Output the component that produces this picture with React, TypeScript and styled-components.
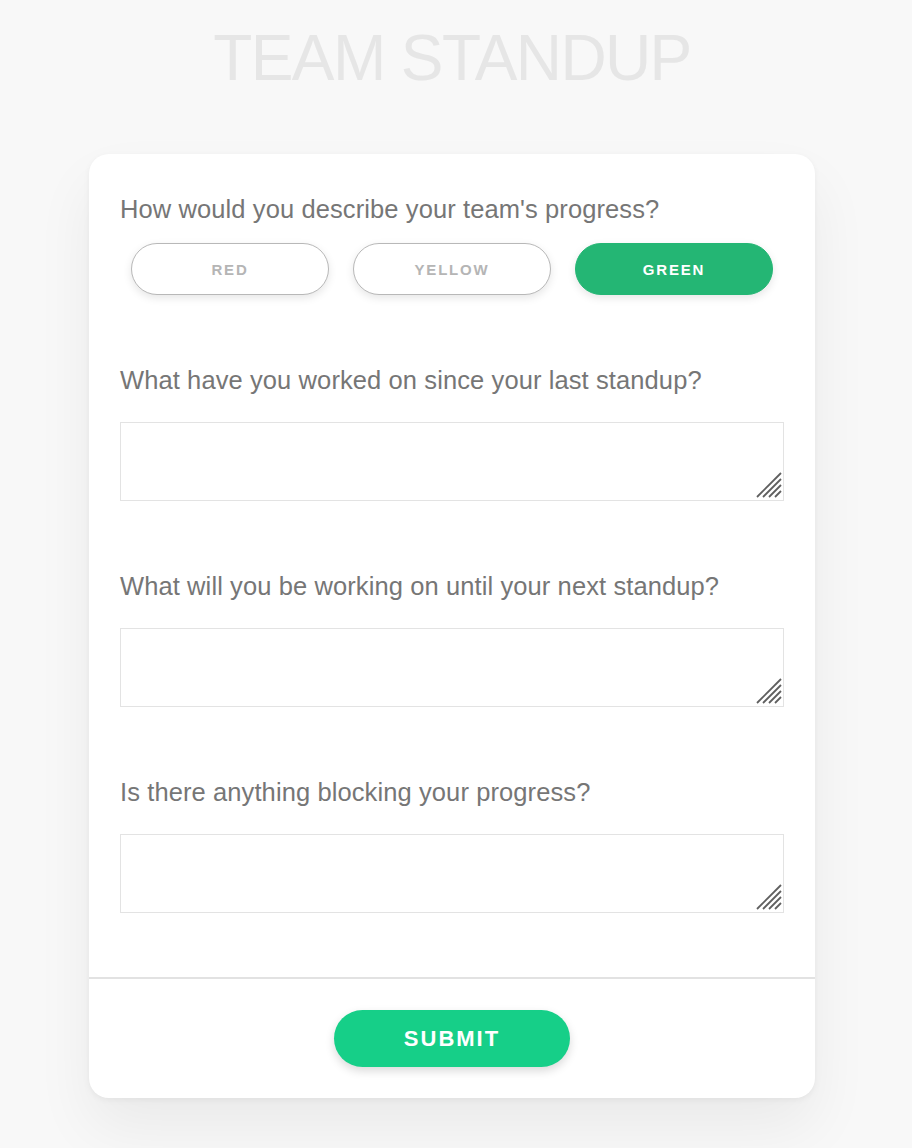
import React, { useState } from "react";
import styled, { createGlobalStyle, css } from "styled-components";

const GlobalStyle = createGlobalStyle`
  html, body {
    margin: 0;
    padding: 0;
    background: #f8f8f8;
    font-family: "Liberation Sans", Arial, Helvetica, sans-serif;
  }
  * {
    box-sizing: border-box;
  }
`

const questions = [
    "What have you worked on since your last standup?",
    "What will you be working on until your next standup?",
    "Is there anything blocking your progress?",
]

const statuses = ["RED", "YELLOW", "GREEN"]

const ResizeHandle = () => (
    <HandleSvg width="26" height="26" viewBox="0 0 26 26">
        <line x1="1" y1="25" x2="25" y2="1" />
        <line x1="7" y1="25" x2="25" y2="7" />
        <line x1="13" y1="25" x2="25" y2="13" />
        <line x1="19" y1="25" x2="25" y2="19" />
    </HandleSvg>
)

const App = () => {
    const [status, setStatus] = useState("GREEN")

    return (
        <PageWrapper>
            <GlobalStyle/>
            <Title>TEAM STANDUP</Title>
            <Card>
                <CardBody>
                    <Section>
                        <Question>How would you describe your team's progress?</Question>
                        <StatusRow>
                            {statuses.map((s) => (
                                <StatusButton key={s} active={s === status} onClick={() => setStatus(s)}>
                                    {s}
                                </StatusButton>
                            ))}
                        </StatusRow>
                    </Section>
                    {questions.map((q) => (
                        <Section key={q}>
                            <Question>{q}</Question>
                            <AnswerWrapper>
                                <Answer/>
                                <ResizeHandle/>
                            </AnswerWrapper>
                        </Section>
                    ))}
                </CardBody>
                <CardFooter>
                    <SubmitButton>SUBMIT</SubmitButton>
                </CardFooter>
            </Card>
        </PageWrapper>
    );
};

const PageWrapper = styled.div`
  min-height: 1148px;
  padding: 26px 8px 60px 0;
  display: flex;
  flex-direction: column;
  align-items: center;
`

const Title = styled.h1`
  margin: 0 0 64px 0;
  font-size: 64px;
  line-height: 64px;
  font-weight: 400;
  letter-spacing: -1.6px;
  color: #e6e6e6;
`

const Card = styled.div`
  width: 726px;
  background: #fff;
  border-radius: 20px;
  box-shadow: 0 2px 6px rgba(0, 0, 0, 0.05), 0 30px 60px rgba(0, 0, 0, 0.06);
  overflow: hidden;
`

const CardBody = styled.div`
  padding: 40px 31px 64px 31px;
  display: flex;
  flex-direction: column;
  gap: 70px;
`

const Section = styled.div`
  display: flex;
  flex-direction: column;
  gap: 27px;

  &:first-child {
    gap: 19px;
  }
`

const Question = styled.div`
  font-size: 25.5px;
  line-height: 30px;
  letter-spacing: 0.1px;
  color: #767676;
`

const StatusRow = styled.div`
  display: flex;
  gap: 24px;
  padding: 0 11px;
`

interface StatusButtonProps {
    active: boolean
}

const StatusButton = styled.button.withConfig({
    shouldForwardProp: (prop) => prop !== "active",
})<StatusButtonProps>`
  width: 198px;
  height: 52px;
  border-radius: 26px;
  font-family: "Liberation Sans", Arial, sans-serif;
  font-size: 15px;
  font-weight: 700;
  letter-spacing: 1.8px;
  cursor: pointer;
  ${({active}) => {
      if (active) {
          return css`
            background: #24b674;
            border: 1px solid #24b674;
            color: #fff;
            box-shadow: 0 3px 8px rgba(0, 0, 0, 0.1);
          `
      } else {
          return css`
            background: #fff;
            border: 1px solid #b8b8b8;
            color: #b5b5b5;
            box-shadow: 0 3px 8px rgba(0, 0, 0, 0.1);
          `
      }
  }}
`

const AnswerWrapper = styled.div`
  position: relative;
  height: 79px;
`

const Answer = styled.textarea`
  display: block;
  width: 100%;
  height: 79px;
  border: 1px solid #e3e3e3;
  border-radius: 0;
  resize: none;
  outline: none;
  padding: 6px 8px;
  font-family: "Liberation Sans", Arial, sans-serif;
  font-size: 16px;
  color: #555;
  background: #fff;
`

const HandleSvg = styled.svg`
  position: absolute;
  right: 2px;
  bottom: 3px;
  pointer-events: none;

  line {
    stroke: #5f5f5f;
    stroke-width: 1.8;
  }
`

const CardFooter = styled.div`
  border-top: 2px solid #e2e2e2;
  padding: 31px 0;
  display: flex;
  justify-content: center;
`

const SubmitButton = styled.button`
  width: 236px;
  height: 57px;
  border: none;
  border-radius: 29px;
  background: #16cf88;
  color: #fff;
  font-family: "Liberation Sans", Arial, sans-serif;
  font-size: 22px;
  font-weight: 700;
  letter-spacing: 2px;
  box-shadow: 0 4px 10px rgba(0, 0, 0, 0.15);
  cursor: pointer;
`

export default App;
